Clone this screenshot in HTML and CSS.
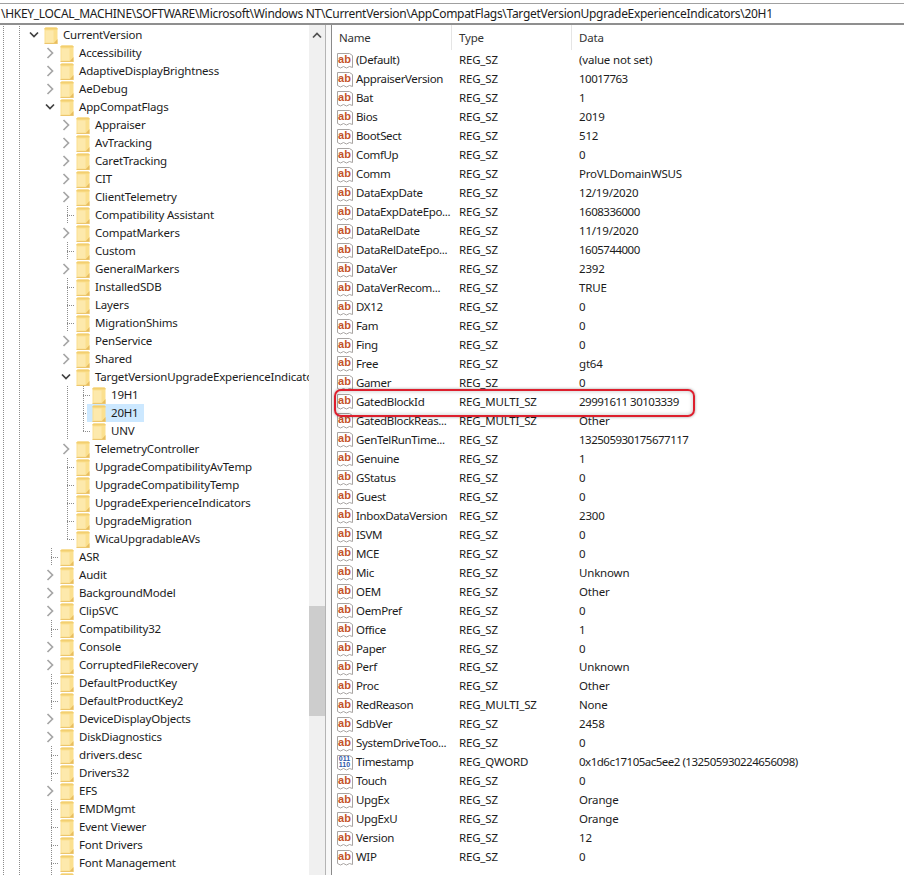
FILE: index.html
```html
<!DOCTYPE html>
<html lang="en">
<head>
<meta charset="utf-8">
<title>Registry Editor</title>
<link rel="stylesheet" href="styles.css">
</head>
<body>
<svg class="defs" width="0" height="0" aria-hidden="true">
  <symbol id="fd" viewBox="0 0 14 17">
    <path d="M.5 1.5 1.5.5h11l1 1V16.5H.5z" fill="#fbe08f"/>
    <path d="M.5 1.5 1.5.5h11l1 1v1H.5z" fill="#f3cf70"/>
    <path d="M1.5 3.5h8v12h-8z" fill="#fde9ac"/>
    <path d="M9.5 16.5 13.5 12v4.5z" fill="#e8bd5e"/>
    <path d="M.5 16.5h13" stroke="#ecc66e" stroke-width="1"/>
  </symbol>
  <symbol id="cr" viewBox="0 0 10 12"><path d="M2.5 1 7.5 6l-5 5" fill="none" stroke="#a6a6a6" stroke-width="1.7"/></symbol>
  <symbol id="cd" viewBox="0 0 10 12"><path d="M1 3.5 5 7.5l4-4" fill="none" stroke="#404040" stroke-width="1.7"/></symbol>
  <symbol id="pg" viewBox="0 0 16 17">
    <path d="M.5 1.5h12l3 2v12l-3-1-3 1.5-3-1.5-3 1.5-3-1.5z" fill="#fff" stroke="#a8a4a2"/>
  </symbol>
</svg>
<div class="address">\HKEY_LOCAL_MACHINE\SOFTWARE\Microsoft\Windows NT\CurrentVersion\AppCompatFlags\TargetVersionUpgradeExperienceIndicators\20H1</div>
<div class="main">
  <div class="treepane">
    <div class="tree">
      <div class="row"><i class="g v"></i><i class="g v"></i><i class="g"><svg class="chev"><use href="#cd"/></svg></i><svg class="folder"><use href="#fd"/></svg><span class="nm">CurrentVersion</span></div>
      <div class="row"><i class="g v"></i><i class="g v"></i><i class="g"></i><i class="g"><svg class="chev"><use href="#cr"/></svg></i><svg class="folder"><use href="#fd"/></svg><span class="nm">Accessibility</span></div>
      <div class="row"><i class="g v"></i><i class="g v"></i><i class="g"></i><i class="g"><svg class="chev"><use href="#cr"/></svg></i><svg class="folder"><use href="#fd"/></svg><span class="nm">AdaptiveDisplayBrightness</span></div>
      <div class="row"><i class="g v"></i><i class="g v"></i><i class="g"></i><i class="g"><svg class="chev"><use href="#cr"/></svg></i><svg class="folder"><use href="#fd"/></svg><span class="nm">AeDebug</span></div>
      <div class="row"><i class="g v"></i><i class="g v"></i><i class="g"></i><i class="g"><svg class="chev"><use href="#cd"/></svg></i><svg class="folder"><use href="#fd"/></svg><span class="nm">AppCompatFlags</span></div>
      <div class="row"><i class="g v"></i><i class="g v"></i><i class="g"></i><i class="g"></i><i class="g"><svg class="chev"><use href="#cr"/></svg></i><svg class="folder"><use href="#fd"/></svg><span class="nm">Appraiser</span></div>
      <div class="row"><i class="g v"></i><i class="g v"></i><i class="g"></i><i class="g"></i><i class="g"><svg class="chev"><use href="#cr"/></svg></i><svg class="folder"><use href="#fd"/></svg><span class="nm">AvTracking</span></div>
      <div class="row"><i class="g v"></i><i class="g v"></i><i class="g"></i><i class="g"></i><i class="g"><svg class="chev"><use href="#cr"/></svg></i><svg class="folder"><use href="#fd"/></svg><span class="nm">CaretTracking</span></div>
      <div class="row"><i class="g v"></i><i class="g v"></i><i class="g"></i><i class="g"></i><i class="g"><svg class="chev"><use href="#cr"/></svg></i><svg class="folder"><use href="#fd"/></svg><span class="nm">CIT</span></div>
      <div class="row"><i class="g v"></i><i class="g v"></i><i class="g"></i><i class="g"></i><i class="g"><svg class="chev"><use href="#cr"/></svg></i><svg class="folder"><use href="#fd"/></svg><span class="nm">ClientTelemetry</span></div>
      <div class="row"><i class="g v"></i><i class="g v"></i><i class="g"></i><i class="g"></i><i class="g t"></i><svg class="folder"><use href="#fd"/></svg><span class="nm">Compatibility Assistant</span></div>
      <div class="row"><i class="g v"></i><i class="g v"></i><i class="g"></i><i class="g"></i><i class="g"><svg class="chev"><use href="#cr"/></svg></i><svg class="folder"><use href="#fd"/></svg><span class="nm">CompatMarkers</span></div>
      <div class="row"><i class="g v"></i><i class="g v"></i><i class="g"></i><i class="g"></i><i class="g t"></i><svg class="folder"><use href="#fd"/></svg><span class="nm">Custom</span></div>
      <div class="row"><i class="g v"></i><i class="g v"></i><i class="g"></i><i class="g"></i><i class="g"><svg class="chev"><use href="#cr"/></svg></i><svg class="folder"><use href="#fd"/></svg><span class="nm">GeneralMarkers</span></div>
      <div class="row"><i class="g v"></i><i class="g v"></i><i class="g"></i><i class="g"></i><i class="g t"></i><svg class="folder"><use href="#fd"/></svg><span class="nm">InstalledSDB</span></div>
      <div class="row"><i class="g v"></i><i class="g v"></i><i class="g"></i><i class="g"></i><i class="g t"></i><svg class="folder"><use href="#fd"/></svg><span class="nm">Layers</span></div>
      <div class="row"><i class="g v"></i><i class="g v"></i><i class="g"></i><i class="g"></i><i class="g t"></i><svg class="folder"><use href="#fd"/></svg><span class="nm">MigrationShims</span></div>
      <div class="row"><i class="g v"></i><i class="g v"></i><i class="g"></i><i class="g"></i><i class="g"><svg class="chev"><use href="#cr"/></svg></i><svg class="folder"><use href="#fd"/></svg><span class="nm">PenService</span></div>
      <div class="row"><i class="g v"></i><i class="g v"></i><i class="g"></i><i class="g"></i><i class="g"><svg class="chev"><use href="#cr"/></svg></i><svg class="folder"><use href="#fd"/></svg><span class="nm">Shared</span></div>
      <div class="row"><i class="g v"></i><i class="g v"></i><i class="g"></i><i class="g"></i><i class="g"><svg class="chev"><use href="#cd"/></svg></i><svg class="folder"><use href="#fd"/></svg><span class="nm">TargetVersionUpgradeExperienceIndicators</span></div>
      <div class="row"><i class="g v"></i><i class="g v"></i><i class="g"></i><i class="g"></i><i class="g v"></i><i class="g t"></i><svg class="folder"><use href="#fd"/></svg><span class="nm">19H1</span></div>
      <div class="row"><i class="g v"></i><i class="g v"></i><i class="g"></i><i class="g"></i><i class="g v"></i><i class="g t"></i><span class="sel"><svg class="folder"><use href="#fd"/></svg><span class="nm">20H1</span></span></div>
      <div class="row"><i class="g v"></i><i class="g v"></i><i class="g"></i><i class="g"></i><i class="g v"></i><i class="g e"></i><svg class="folder"><use href="#fd"/></svg><span class="nm">UNV</span></div>
      <div class="row"><i class="g v"></i><i class="g v"></i><i class="g"></i><i class="g"></i><i class="g"><svg class="chev"><use href="#cr"/></svg></i><svg class="folder"><use href="#fd"/></svg><span class="nm">TelemetryController</span></div>
      <div class="row"><i class="g v"></i><i class="g v"></i><i class="g"></i><i class="g"></i><i class="g t"></i><svg class="folder"><use href="#fd"/></svg><span class="nm">UpgradeCompatibilityAvTemp</span></div>
      <div class="row"><i class="g v"></i><i class="g v"></i><i class="g"></i><i class="g"></i><i class="g t"></i><svg class="folder"><use href="#fd"/></svg><span class="nm">UpgradeCompatibilityTemp</span></div>
      <div class="row"><i class="g v"></i><i class="g v"></i><i class="g"></i><i class="g"></i><i class="g t"></i><svg class="folder"><use href="#fd"/></svg><span class="nm">UpgradeExperienceIndicators</span></div>
      <div class="row"><i class="g v"></i><i class="g v"></i><i class="g"></i><i class="g"></i><i class="g t"></i><svg class="folder"><use href="#fd"/></svg><span class="nm">UpgradeMigration</span></div>
      <div class="row"><i class="g v"></i><i class="g v"></i><i class="g"></i><i class="g"></i><i class="g e"></i><svg class="folder"><use href="#fd"/></svg><span class="nm">WicaUpgradableAVs</span></div>
      <div class="row"><i class="g v"></i><i class="g v"></i><i class="g"></i><i class="g t"></i><svg class="folder"><use href="#fd"/></svg><span class="nm">ASR</span></div>
      <div class="row"><i class="g v"></i><i class="g v"></i><i class="g"></i><i class="g"><svg class="chev"><use href="#cr"/></svg></i><svg class="folder"><use href="#fd"/></svg><span class="nm">Audit</span></div>
      <div class="row"><i class="g v"></i><i class="g v"></i><i class="g"></i><i class="g"><svg class="chev"><use href="#cr"/></svg></i><svg class="folder"><use href="#fd"/></svg><span class="nm">BackgroundModel</span></div>
      <div class="row"><i class="g v"></i><i class="g v"></i><i class="g"></i><i class="g"><svg class="chev"><use href="#cr"/></svg></i><svg class="folder"><use href="#fd"/></svg><span class="nm">ClipSVC</span></div>
      <div class="row"><i class="g v"></i><i class="g v"></i><i class="g"></i><i class="g t"></i><svg class="folder"><use href="#fd"/></svg><span class="nm">Compatibility32</span></div>
      <div class="row"><i class="g v"></i><i class="g v"></i><i class="g"></i><i class="g"><svg class="chev"><use href="#cr"/></svg></i><svg class="folder"><use href="#fd"/></svg><span class="nm">Console</span></div>
      <div class="row"><i class="g v"></i><i class="g v"></i><i class="g"></i><i class="g"><svg class="chev"><use href="#cr"/></svg></i><svg class="folder"><use href="#fd"/></svg><span class="nm">CorruptedFileRecovery</span></div>
      <div class="row"><i class="g v"></i><i class="g v"></i><i class="g"></i><i class="g t"></i><svg class="folder"><use href="#fd"/></svg><span class="nm">DefaultProductKey</span></div>
      <div class="row"><i class="g v"></i><i class="g v"></i><i class="g"></i><i class="g t"></i><svg class="folder"><use href="#fd"/></svg><span class="nm">DefaultProductKey2</span></div>
      <div class="row"><i class="g v"></i><i class="g v"></i><i class="g"></i><i class="g"><svg class="chev"><use href="#cr"/></svg></i><svg class="folder"><use href="#fd"/></svg><span class="nm">DeviceDisplayObjects</span></div>
      <div class="row"><i class="g v"></i><i class="g v"></i><i class="g"></i><i class="g"><svg class="chev"><use href="#cr"/></svg></i><svg class="folder"><use href="#fd"/></svg><span class="nm">DiskDiagnostics</span></div>
      <div class="row"><i class="g v"></i><i class="g v"></i><i class="g"></i><i class="g t"></i><svg class="folder"><use href="#fd"/></svg><span class="nm">drivers.desc</span></div>
      <div class="row"><i class="g v"></i><i class="g v"></i><i class="g"></i><i class="g t"></i><svg class="folder"><use href="#fd"/></svg><span class="nm">Drivers32</span></div>
      <div class="row"><i class="g v"></i><i class="g v"></i><i class="g"></i><i class="g"><svg class="chev"><use href="#cr"/></svg></i><svg class="folder"><use href="#fd"/></svg><span class="nm">EFS</span></div>
      <div class="row"><i class="g v"></i><i class="g v"></i><i class="g"></i><i class="g t"></i><svg class="folder"><use href="#fd"/></svg><span class="nm">EMDMgmt</span></div>
      <div class="row"><i class="g v"></i><i class="g v"></i><i class="g"></i><i class="g t"></i><svg class="folder"><use href="#fd"/></svg><span class="nm">Event Viewer</span></div>
      <div class="row"><i class="g v"></i><i class="g v"></i><i class="g"></i><i class="g t"></i><svg class="folder"><use href="#fd"/></svg><span class="nm">Font Drivers</span></div>
      <div class="row"><i class="g v"></i><i class="g v"></i><i class="g"></i><i class="g t"></i><svg class="folder"><use href="#fd"/></svg><span class="nm">Font Management</span></div>
      <div class="row"><i class="g v"></i><i class="g v"></i><i class="g"></i><i class="g t"></i><svg class="folder"><use href="#fd"/></svg></div>
    </div>
    <div class="scrollbar">
      <svg class="sb-arrow" viewBox="0 0 10 7"><path d="M1 5.5 5 1.5l4 4" fill="none" stroke="#505050" stroke-width="1.7"/></svg>
      <div class="sb-thumb"></div>
    </div>
  </div>
  <div class="splitter"></div>
  <div class="listpane">
    <div class="head"><span class="hc h1">Name</span><span class="hc h2">Type</span><span class="hc h3">Data</span></div>
    <div class="vals">
      <div class="vrow"><span class="vi"><svg class="pg"><use href="#pg"/></svg><b class="ab">ab</b></span><span class="vn">(Default)</span><span class="vt">REG_SZ</span><span class="vd">(value not set)</span></div>
      <div class="vrow"><span class="vi"><svg class="pg"><use href="#pg"/></svg><b class="ab">ab</b></span><span class="vn">AppraiserVersion</span><span class="vt">REG_SZ</span><span class="vd num">10017763</span></div>
      <div class="vrow"><span class="vi"><svg class="pg"><use href="#pg"/></svg><b class="ab">ab</b></span><span class="vn">Bat</span><span class="vt">REG_SZ</span><span class="vd">1</span></div>
      <div class="vrow"><span class="vi"><svg class="pg"><use href="#pg"/></svg><b class="ab">ab</b></span><span class="vn">Bios</span><span class="vt">REG_SZ</span><span class="vd">2019</span></div>
      <div class="vrow"><span class="vi"><svg class="pg"><use href="#pg"/></svg><b class="ab">ab</b></span><span class="vn">BootSect</span><span class="vt">REG_SZ</span><span class="vd">512</span></div>
      <div class="vrow"><span class="vi"><svg class="pg"><use href="#pg"/></svg><b class="ab">ab</b></span><span class="vn">ComfUp</span><span class="vt">REG_SZ</span><span class="vd">0</span></div>
      <div class="vrow"><span class="vi"><svg class="pg"><use href="#pg"/></svg><b class="ab">ab</b></span><span class="vn">Comm</span><span class="vt">REG_SZ</span><span class="vd">ProVLDomainWSUS</span></div>
      <div class="vrow"><span class="vi"><svg class="pg"><use href="#pg"/></svg><b class="ab">ab</b></span><span class="vn">DataExpDate</span><span class="vt">REG_SZ</span><span class="vd">12/19/2020</span></div>
      <div class="vrow"><span class="vi"><svg class="pg"><use href="#pg"/></svg><b class="ab">ab</b></span><span class="vn">DataExpDateEpo...</span><span class="vt">REG_SZ</span><span class="vd num">1608336000</span></div>
      <div class="vrow"><span class="vi"><svg class="pg"><use href="#pg"/></svg><b class="ab">ab</b></span><span class="vn">DataRelDate</span><span class="vt">REG_SZ</span><span class="vd">11/19/2020</span></div>
      <div class="vrow"><span class="vi"><svg class="pg"><use href="#pg"/></svg><b class="ab">ab</b></span><span class="vn">DataRelDateEpo...</span><span class="vt">REG_SZ</span><span class="vd num">1605744000</span></div>
      <div class="vrow"><span class="vi"><svg class="pg"><use href="#pg"/></svg><b class="ab">ab</b></span><span class="vn">DataVer</span><span class="vt">REG_SZ</span><span class="vd">2392</span></div>
      <div class="vrow"><span class="vi"><svg class="pg"><use href="#pg"/></svg><b class="ab">ab</b></span><span class="vn">DataVerRecom...</span><span class="vt">REG_SZ</span><span class="vd">TRUE</span></div>
      <div class="vrow"><span class="vi"><svg class="pg"><use href="#pg"/></svg><b class="ab">ab</b></span><span class="vn">DX12</span><span class="vt">REG_SZ</span><span class="vd">0</span></div>
      <div class="vrow"><span class="vi"><svg class="pg"><use href="#pg"/></svg><b class="ab">ab</b></span><span class="vn">Fam</span><span class="vt">REG_SZ</span><span class="vd">0</span></div>
      <div class="vrow"><span class="vi"><svg class="pg"><use href="#pg"/></svg><b class="ab">ab</b></span><span class="vn">Fing</span><span class="vt">REG_SZ</span><span class="vd">0</span></div>
      <div class="vrow"><span class="vi"><svg class="pg"><use href="#pg"/></svg><b class="ab">ab</b></span><span class="vn">Free</span><span class="vt">REG_SZ</span><span class="vd">gt64</span></div>
      <div class="vrow"><span class="vi"><svg class="pg"><use href="#pg"/></svg><b class="ab">ab</b></span><span class="vn">Gamer</span><span class="vt">REG_SZ</span><span class="vd">0</span></div>
      <div class="vrow marked"><span class="vi"><svg class="pg"><use href="#pg"/></svg><b class="ab">ab</b></span><span class="vn">GatedBlockId</span><span class="vt">REG_MULTI_SZ</span><span class="vd num">29991611 30103339</span></div>
      <div class="vrow"><span class="vi"><svg class="pg"><use href="#pg"/></svg><b class="ab">ab</b></span><span class="vn">GatedBlockReas...</span><span class="vt">REG_MULTI_SZ</span><span class="vd">Other</span></div>
      <div class="vrow"><span class="vi"><svg class="pg"><use href="#pg"/></svg><b class="ab">ab</b></span><span class="vn">GenTelRunTime...</span><span class="vt">REG_SZ</span><span class="vd num">132505930175677117</span></div>
      <div class="vrow"><span class="vi"><svg class="pg"><use href="#pg"/></svg><b class="ab">ab</b></span><span class="vn">Genuine</span><span class="vt">REG_SZ</span><span class="vd">1</span></div>
      <div class="vrow"><span class="vi"><svg class="pg"><use href="#pg"/></svg><b class="ab">ab</b></span><span class="vn">GStatus</span><span class="vt">REG_SZ</span><span class="vd">0</span></div>
      <div class="vrow"><span class="vi"><svg class="pg"><use href="#pg"/></svg><b class="ab">ab</b></span><span class="vn">Guest</span><span class="vt">REG_SZ</span><span class="vd">0</span></div>
      <div class="vrow"><span class="vi"><svg class="pg"><use href="#pg"/></svg><b class="ab">ab</b></span><span class="vn">InboxDataVersion</span><span class="vt">REG_SZ</span><span class="vd">2300</span></div>
      <div class="vrow"><span class="vi"><svg class="pg"><use href="#pg"/></svg><b class="ab">ab</b></span><span class="vn">ISVM</span><span class="vt">REG_SZ</span><span class="vd">0</span></div>
      <div class="vrow"><span class="vi"><svg class="pg"><use href="#pg"/></svg><b class="ab">ab</b></span><span class="vn">MCE</span><span class="vt">REG_SZ</span><span class="vd">0</span></div>
      <div class="vrow"><span class="vi"><svg class="pg"><use href="#pg"/></svg><b class="ab">ab</b></span><span class="vn">Mic</span><span class="vt">REG_SZ</span><span class="vd">Unknown</span></div>
      <div class="vrow"><span class="vi"><svg class="pg"><use href="#pg"/></svg><b class="ab">ab</b></span><span class="vn">OEM</span><span class="vt">REG_SZ</span><span class="vd">Other</span></div>
      <div class="vrow"><span class="vi"><svg class="pg"><use href="#pg"/></svg><b class="ab">ab</b></span><span class="vn">OemPref</span><span class="vt">REG_SZ</span><span class="vd">0</span></div>
      <div class="vrow"><span class="vi"><svg class="pg"><use href="#pg"/></svg><b class="ab">ab</b></span><span class="vn">Office</span><span class="vt">REG_SZ</span><span class="vd">1</span></div>
      <div class="vrow"><span class="vi"><svg class="pg"><use href="#pg"/></svg><b class="ab">ab</b></span><span class="vn">Paper</span><span class="vt">REG_SZ</span><span class="vd">0</span></div>
      <div class="vrow"><span class="vi"><svg class="pg"><use href="#pg"/></svg><b class="ab">ab</b></span><span class="vn">Perf</span><span class="vt">REG_SZ</span><span class="vd">Unknown</span></div>
      <div class="vrow"><span class="vi"><svg class="pg"><use href="#pg"/></svg><b class="ab">ab</b></span><span class="vn">Proc</span><span class="vt">REG_SZ</span><span class="vd">Other</span></div>
      <div class="vrow"><span class="vi"><svg class="pg"><use href="#pg"/></svg><b class="ab">ab</b></span><span class="vn">RedReason</span><span class="vt">REG_MULTI_SZ</span><span class="vd">None</span></div>
      <div class="vrow"><span class="vi"><svg class="pg"><use href="#pg"/></svg><b class="ab">ab</b></span><span class="vn">SdbVer</span><span class="vt">REG_SZ</span><span class="vd">2458</span></div>
      <div class="vrow"><span class="vi"><svg class="pg"><use href="#pg"/></svg><b class="ab">ab</b></span><span class="vn">SystemDriveToo...</span><span class="vt">REG_SZ</span><span class="vd">0</span></div>
      <div class="vrow"><span class="vi"><svg class="pg"><use href="#pg"/></svg><b class="bin">011<br>110</b></span><span class="vn">Timestamp</span><span class="vt">REG_QWORD</span><span class="vd num">0x1d6c17105ac5ee2 (132505930224656098)</span></div>
      <div class="vrow"><span class="vi"><svg class="pg"><use href="#pg"/></svg><b class="ab">ab</b></span><span class="vn">Touch</span><span class="vt">REG_SZ</span><span class="vd">0</span></div>
      <div class="vrow"><span class="vi"><svg class="pg"><use href="#pg"/></svg><b class="ab">ab</b></span><span class="vn">UpgEx</span><span class="vt">REG_SZ</span><span class="vd">Orange</span></div>
      <div class="vrow"><span class="vi"><svg class="pg"><use href="#pg"/></svg><b class="ab">ab</b></span><span class="vn">UpgExU</span><span class="vt">REG_SZ</span><span class="vd">Orange</span></div>
      <div class="vrow"><span class="vi"><svg class="pg"><use href="#pg"/></svg><b class="ab">ab</b></span><span class="vn">Version</span><span class="vt">REG_SZ</span><span class="vd">12</span></div>
      <div class="vrow"><span class="vi"><svg class="pg"><use href="#pg"/></svg><b class="ab">ab</b></span><span class="vn">WIP</span><span class="vt">REG_SZ</span><span class="vd">0</span></div>
    </div>
  </div>
</div>
</body>
</html>
```
FILE: styles.css
```css
* { box-sizing: border-box; }
html, body { margin: 0; height: 100%; overflow: hidden; }
body {
  display: flex;
  flex-direction: column;
  background: #fff;
  color: #1c1c1c;
  font: 11.5px/18px "Noto Sans", sans-serif;
  letter-spacing: -0.19px;
}
.defs { position: absolute; }
.address {
  flex: none;
  height: 22px;
  margin-top: 3px;
  border-top: 1px solid #a0a0a0;
  border-bottom: 2px solid #8f8f8f;
  padding-left: 1px;
  font-size: 12px;
  letter-spacing: -0.3px;
  line-height: 20px;
  white-space: nowrap;
  overflow: hidden;
}
.main { flex: 1; display: flex; min-height: 0; }
.treepane { flex: none; width: 326px; display: flex; border-right: 1px solid #b4b4b4; }
.tree { flex: none; width: 309px; padding-top: 1px; overflow: hidden; }
.row { display: flex; align-items: center; height: 18px; margin-left: -5px; white-space: nowrap; }
.g { flex: none; width: 16px; height: 18px; display: block; }
.v, .t, .e {
  background-image: repeating-linear-gradient(to bottom, #8c8c8c 0 1px, transparent 1px 2px);
  background-repeat: no-repeat;
  background-position: 8px 0;
  background-size: 1px 18px;
}
.t, .e {
  background-image:
    repeating-linear-gradient(to bottom, #8c8c8c 0 1px, transparent 1px 2px),
    repeating-linear-gradient(to right, #8c8c8c 0 1px, transparent 1px 2px);
  background-position: 8px 0, 8px 9px;
  background-size: 1px 18px, 8px 1px;
}
.e { background-size: 1px 10px, 8px 1px; }
.chev { display: block; width: 10px; height: 12px; margin: 3px 0 0 2px; }
.folder { flex: none; width: 14px; height: 17px; margin-left: 1px; }
.nm { margin-left: 5px; }
.sel { display: flex; align-items: center; height: 18px; margin-left: -4px; padding: 0 5px 0 4px; background: #cce8ff; }
.scrollbar { flex: none; width: 16px; background: #f0f0f0; display: flex; flex-direction: column; align-items: center; }
.sb-arrow { flex: none; width: 10px; height: 7px; margin-top: 7px; }
.sb-thumb { flex: none; width: 16px; height: 110px; margin-top: 567px; background: #cdcdcd; }
.splitter { flex: none; width: 5px; background: #f8f8f8; }
.listpane { flex: 1; min-width: 0; border-left: 1px solid #8a8a8a; overflow: hidden; }
.head { display: flex; height: 25px; color: #333; }
.hc { height: 25px; line-height: 25px; padding-left: 7px; border-right: 1px solid #e5e5e5; }
.h1 { width: 120px; }
.h2 { width: 120px; }
.h3 { flex: 1; border-right: 0; }
.vals { padding-top: 1px; }
.vrow { display: flex; align-items: center; height: 18.98px; padding-left: 5px; white-space: nowrap; }
.vi { flex: none; display: grid; width: 16px; height: 17px; }
.vi > * { grid-area: 1 / 1; }
.pg { width: 16px; height: 17px; }
.ab {
  font: bold 11px/15px "Liberation Sans", sans-serif;
  letter-spacing: 0;
  color: #c4532a;
  text-align: center;
  padding-right: 1px;
}
.bin {
  font: bold 7px/6px "Liberation Sans", sans-serif;
  letter-spacing: 0;
  color: #2c55a8;
  text-align: center;
  padding: 2px 1px 0 0;
}
.vn { flex: none; width: 106px; padding-left: 3px; letter-spacing: -0.35px; }
.vt { flex: none; width: 120px; }
.vd { flex: none; }
.num { letter-spacing: -0.5px; }
.marked { position: relative; }
.marked::after {
  content: "";
  position: absolute;
  left: 2px;
  top: -3px;
  width: 357px;
  height: 24px;
  border: 2px solid #dd1f2d;
  border-radius: 7px;
  box-shadow: 0 0 3px rgba(0,0,0,.4), inset 0 0 4px rgba(0,0,0,.25);
}
```
